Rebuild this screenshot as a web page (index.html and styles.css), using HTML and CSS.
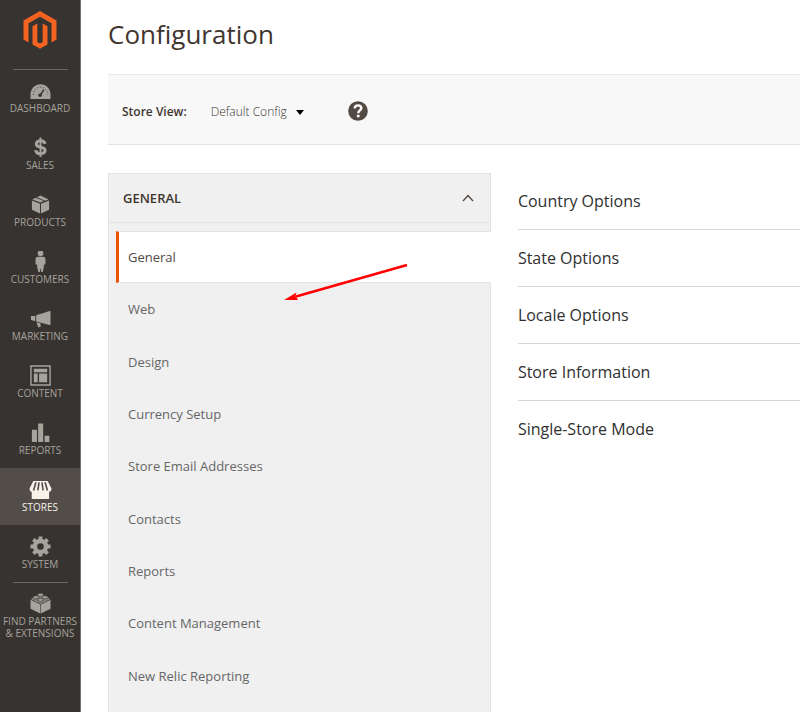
FILE: index.html
```html
<!DOCTYPE html>
<html lang="en">
<head>
    <meta charset="UTF-8">
    <meta name="viewport" content="width=device-width, initial-scale=1.0">
    <title>Configuration</title>
    <link rel="stylesheet" href="styles.css">
</head>
<body>
    <div class="page">
        <aside class="sidebar">
            <a class="logo" href="#">
                <svg width="34" height="38" viewBox="0 0 34 38" fill="#f26322"><path d="M17 0L33.500 9.500V28.500L28.500 31.400V12.300L17 5.700L5.500 12.300V31.400L.5 28.500V9.500zM14.300 12.500V31L17 32.600L19.700 31V12.500L24.500 15.200V33.500L17 37.800L9.500 33.500V15.200z"/></svg>
            </a>
            <nav class="menu">
                <a class="menu-item divided" href="#">
                    <svg class="icon" viewBox="0 0 22 22"><path fill="currentColor" d="M.5 20v-4.500C.5 9 5.200 4.500 11 4.500S21.500 9 21.500 15.500V20z"/><g fill="none" stroke="#373330"><path stroke-dasharray="1 2" d="M3.500 15.500c0-5 3.500-8 7.500-8s7.500 3 7.500 8"/><path stroke-width="1.600" d="M10.500 16.500L14.500 10"/></g><circle cx="10.500" cy="16" r="1.800" fill="#373330"/></svg>
                    <span>DASHBOARD</span>
                </a>
                <a class="menu-item" href="#">
                    <svg class="icon" viewBox="0 0 22 22" fill="none" stroke="currentColor" stroke-width="3.200"><path d="M15.800 7.200C15.300 4.900 13.500 4 11 4c-2.700 0-4.400 1.300-4.400 3.300 0 4.700 9.200 2.200 9.200 6.700 0 2.300-2 3.500-4.800 3.500-3 0-4.800-1.300-5-3.700"/><path stroke-width="2" d="M11 .5v20.500"/></svg>
                    <span>SALES</span>
                </a>
                <a class="menu-item" href="#">
                    <svg class="icon" viewBox="0 0 22 22" fill="currentColor"><path d="M2 6.800L10.500 10.300v10.200L2 16.500zM20 6.800L11.500 10.300v10.200l8.500-4zM2.400 5.700L6 3.900l8.400 3.500L11 9zM7.200 3.300L11 1.500l8.600 4.200L15.800 7z"/></svg>
                    <span>PRODUCTS</span>
                </a>
                <a class="menu-item" href="#">
                    <svg class="icon" viewBox="0 0 22 22" fill="currentColor"><circle cx="11" cy="2.500" r="3"/><path d="M8.500 6h5c2 0 2.700 1.200 2.700 3v5.200h-1.700V17L13.300 22h-1.600L11 17.500 10.300 22H8.700L7.500 17v-2.800H5.800V9c0-1.800.7-3 2.700-3z"/></svg>
                    <span>CUSTOMERS</span>
                </a>
                <a class="menu-item" href="#">
                    <svg class="icon" viewBox="0 0 22 22" fill="currentColor"><path d="M21.500 3v15L6.500 14.200V7.500zM1 8.300h4.500v5.400H4.800L1 12.500zM6.800 15l4 1 .5 3.500-2.600.8z"/></svg>
                    <span>MARKETING</span>
                </a>
                <a class="menu-item" href="#">
                    <svg class="icon" viewBox="0 0 22 22"><path fill="none" stroke="currentColor" stroke-width="1.500" d="M1 1h20v20H1z"/><path fill="currentColor" d="M4 4h14v3.500H4zM4 9h4v9H4zM9.500 9H18v9H9.500z"/></svg>
                    <span>CONTENT</span>
                </a>
                <a class="menu-item" href="#">
                    <svg class="icon" viewBox="0 0 22 22" fill="currentColor"><path d="M2 8h5.300v13H2zM8.500 1.500h5.300V21H8.500zM15.300 14.500h5V21h-5z"/></svg>
                    <span>REPORTS</span>
                </a>
                <a class="menu-item active" href="#">
                    <svg class="icon wide" viewBox="0 0 24 22"><path fill="currentColor" d="M4.500 2h15l4 8c0 2.200-1 3.500-2.500 3.500v7.500H2.800V13.500C1.400 13.500.5 12 .5 10z"/><path fill="none" stroke="#524d49" stroke-width="1.700" d="M7.200 3.500L4.700 12M10.400 3.500L9.300 12M13.600 3.500l1.100 8.500M16.800 3.500l2.500 8.500"/></svg>
                    <span>STORES</span>
                </a>
                <a class="menu-item" href="#">
                    <svg class="icon" viewBox="0 0 22 22"><circle cx="11" cy="11" r="5.800" fill="none" stroke="currentColor" stroke-width="4.600"/><path fill="none" stroke="currentColor" stroke-width="4" d="M11 .5v4M11 17.500v4M.5 11h4M17.500 11h4M3.600 3.600l2.800 2.800M15.600 15.600l2.800 2.800M18.400 3.600l-2.800 2.800M6.400 15.600l-2.800 2.800"/></svg>
                    <span>SYSTEM</span>
                </a>
                <a class="menu-item divided" href="#">
                    <svg class="icon" viewBox="0 0 22 22"><path fill="currentColor" d="M.5 7L10.700 12v9.500L.5 16.500zM21.500 7L11.300 12v9.500l10.200-5zM1 6.200L11 1.200l10 5-10 5.200z"/><g fill="currentColor" stroke="#373330" stroke-width=".6"><path d="M8 1.800v1.500c0 1.800 6 1.800 6 0V1.800"/><ellipse cx="11" cy="1.800" rx="3" ry="1.500"/><path d="M3.200 4.500V6c0 1.800 6 1.800 6 0V4.500M12.800 4.500V6c0 1.800 6 1.800 6 0V4.500"/><ellipse cx="6.200" cy="4.500" rx="3" ry="1.500"/><ellipse cx="15.800" cy="4.500" rx="3" ry="1.500"/><path d="M8 7.200v1.500c0 1.800 6 1.800 6 0V7.200"/><ellipse cx="11" cy="7.200" rx="3" ry="1.500"/></g></svg>
                    <span>FIND PARTNERS<br>&amp; EXTENSIONS</span>
                </a>
            </nav>
        </aside>
        <main class="content">
            <h1>Configuration</h1>
            <div class="toolbar">
                <label for="storeView">Store View:</label>
                <div class="store-select">
                    <select id="storeView">
                        <option>Default Config</option>
                    </select>
                    <svg class="caret" width="8" height="5" viewBox="0 0 8 5"><path d="M0 0h8L4 5z"/></svg>
                </div>
                <button class="help" type="button" aria-label="Help">
                    <svg width="20" height="20" viewBox="0 0 20 20"><circle cx="10" cy="10" r="9.800" fill="#514943"/><path fill="none" stroke="#fff" stroke-width="2.400" d="M6.700 7.400C6.800 5.400 8.200 4.400 10 4.400c2 0 3.300 1.100 3.300 2.700 0 2.300-3.100 2.400-3.100 5.200"/><path fill="#fff" d="M8.900 13.800h2.600v2.500H8.900z"/></svg>
                </button>
            </div>
            <div class="columns">
                <section class="tabs">
                    <button class="tabs-title" type="button">
                        GENERAL
                        <svg width="12" height="8" viewBox="0 0 12 8" fill="none" stroke="#514943" stroke-width="1.300"><path d="M1 7L6 1.500L11 7"/></svg>
                    </button>
                    <nav class="tabs-list">
                        <a class="current" href="#">General</a>
                        <a href="#">Web</a>
                        <a href="#">Design</a>
                        <a href="#">Currency Setup</a>
                        <a href="#">Store Email Addresses</a>
                        <a href="#">Contacts</a>
                        <a href="#">Reports</a>
                        <a href="#">Content Management</a>
                        <a href="#">New Relic Reporting</a>
                    </nav>
                    <svg class="arrow" width="126" height="40" viewBox="0 0 126 40"><path stroke="#f00" stroke-width="2.400" d="M12 33.500L123 2"/><path fill="#f00" d="M0 37L12.500 29.500L11.500 33L14 37z"/></svg>
                </section>
                <section class="options">
                    <a href="#">Country Options</a>
                    <a href="#">State Options</a>
                    <a href="#">Locale Options</a>
                    <a href="#">Store Information</a>
                    <a href="#">Single-Store Mode</a>
                </section>
            </div>
        </main>
    </div>
</body>
</html>
```
FILE: styles.css
```css
* {
    box-sizing: border-box;
}
body {
    margin: 0;
    background: #fff;
    color: #41362f;
    font-family: 'Open Sans', sans-serif;
    font-size: 13px;
}
a {
    color: inherit;
    text-decoration: none;
}
button {
    border: none;
    background: none;
    padding: 0;
    font-family: inherit;
    color: inherit;
    cursor: pointer;
}
.page {
    display: flex;
    min-height: 100vh;
}

/* sidebar */
.sidebar {
    flex: 0 0 81px;
    background: #373330;
    border-right: 1px solid #77726e;
}
.logo {
    display: flex;
    justify-content: center;
    height: 69px;
    padding-top: 11px;
}
.menu-item {
    display: flex;
    flex-direction: column;
    align-items: center;
    gap: 1px;
    min-height: 57px;
    padding-top: 11px;
    color: #a6a29c;
    font-size: 10px;
    line-height: 12px;
    text-align: center;
    white-space: nowrap;
}
.menu-item.active {
    background: #524d49;
    color: #f7f3eb;
}
.divided {
    background: linear-gradient(#6b6661, #6b6661) center top / 55px 1px no-repeat;
}
.icon {
    width: 21px;
    height: 21px;
}
.icon.wide {
    width: 23px;
}

/* main area */
.content {
    flex: 1;
    display: flex;
    flex-direction: column;
    padding-left: 27px;
}
h1 {
    margin: 0;
    height: 74px;
    padding-top: 14px;
    font-size: 26px;
    line-height: 40px;
    font-weight: 400;
}
.toolbar {
    display: flex;
    align-items: center;
    height: 71px;
    margin-bottom: 28px;
    padding: 3px 14px 0;
    background: #f8f8f8;
    border-top: 1px solid #e8e8e8;
    border-bottom: 1px solid #e3e3e3;
}
.toolbar label {
    font-size: 12px;
    font-weight: 600;
    margin-right: 24px;
}
.store-select {
    position: relative;
    margin-right: 44px;
}
.store-select select {
    appearance: none;
    border: none;
    background: none;
    margin: 0;
    padding: 0 16px 0 0;
    font-family: inherit;
    font-size: 12px;
    font-weight: 300;
    color: #41362f;
}
.caret {
    position: absolute;
    right: 0;
    top: 8px;
    pointer-events: none;
}
.help {
    display: flex;
}
.columns {
    flex: 1;
    display: grid;
    grid-template-columns: 19fr 14fr;
    gap: 27px;
}
.tabs {
    position: relative;
    display: flex;
    flex-direction: column;
    background: #f0f0f0;
    border: 1px solid #e3e3e3;
    border-bottom: none;
}
.tabs-title {
    display: flex;
    align-items: center;
    justify-content: space-between;
    height: 49px;
    padding: 0 16px 0 14px;
    border-bottom: 1px solid #e3e3e3;
    font-size: 13px;
    font-weight: 600;
}
.tabs-list {
    flex: 1;
    display: flex;
    flex-direction: column;
    padding: 8px 0 10px 7px;
}
.tabs-list a {
    flex: 1 0 52px;
    display: flex;
    align-items: center;
    padding-left: 12px;
    color: #666;
}
.tabs-list .current {
    margin-right: -1px;
    padding-left: 9px;
    background: #fff;
    border-left: 3px solid #eb5202;
    border-top: 1px solid #e3e3e3;
    border-bottom: 1px solid #e3e3e3;
    color: #514943;
}
/* pointer over the tab list */
.arrow {
    position: absolute;
    left: 175px;
    top: 89px;
}
.options a {
    display: block;
    height: 57px;
    padding-top: 16px;
    border-bottom: 1px solid #d6d6d6;
    color: #303030;
    font-size: 16px;
    font-weight: 500;
    line-height: 24px;
}
.options a:last-child {
    border-bottom: none;
}
```
